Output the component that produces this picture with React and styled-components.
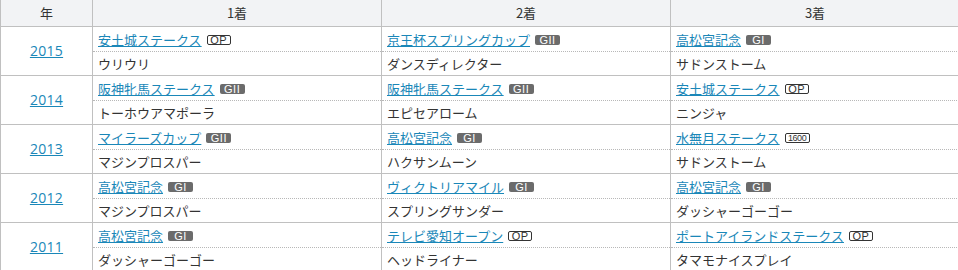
import React from 'react';
import styled, { createGlobalStyle } from 'styled-components';

const GlobalStyle = createGlobalStyle`
  html, body {
    margin: 0;
    padding: 0;
    background: #fff;
    overflow: hidden;
  }
  body {
    font-family: 'Noto Sans CJK JP', 'Noto Sans', sans-serif;
    font-size: 13px;
    color: #333;
  }
`;

const results = [
  {
    year: '2015',
    places: [
      { race: '安土城ステークス', grade: 'OP', horse: 'ウリウリ' },
      { race: '京王杯スプリングカップ', grade: 'G2', horse: 'ダンスディレクター' },
      { race: '高松宮記念', grade: 'G1', horse: 'サドンストーム' },
    ],
  },
  {
    year: '2014',
    places: [
      { race: '阪神牝馬ステークス', grade: 'G2', horse: 'トーホウアマポーラ' },
      { race: '阪神牝馬ステークス', grade: 'G2', horse: 'エピセアローム' },
      { race: '安土城ステークス', grade: 'OP', horse: 'ニンジャ' },
    ],
  },
  {
    year: '2013',
    places: [
      { race: 'マイラーズカップ', grade: 'G2', horse: 'マジンプロスパー' },
      { race: '高松宮記念', grade: 'G1', horse: 'ハクサンムーン' },
      { race: '水無月ステークス', grade: '1600', horse: 'サドンストーム' },
    ],
  },
  {
    year: '2012',
    places: [
      { race: '高松宮記念', grade: 'G1', horse: 'マジンプロスパー' },
      { race: 'ヴィクトリアマイル', grade: 'G1', horse: 'スプリングサンダー' },
      { race: '高松宮記念', grade: 'G1', horse: 'ダッシャーゴーゴー' },
    ],
  },
  {
    year: '2011',
    places: [
      { race: '高松宮記念', grade: 'G1', horse: 'ダッシャーゴーゴー' },
      { race: 'テレビ愛知オープン', grade: 'OP', horse: 'ヘッドライナー' },
      { race: 'ポートアイランドステークス', grade: 'OP', horse: 'タマモナイスプレイ' },
    ],
  },
];

const gradeLabel = {
  G1: 'GI',
  G2: 'GII',
  OP: 'OP',
  1600: '1600',
};

const App = () => {
  return (
    <>
      <GlobalStyle />
      <Table>
        <HeadCell>年</HeadCell>
        <HeadCell>1着</HeadCell>
        <HeadCell>2着</HeadCell>
        <HeadCell>3着</HeadCell>
        {results.map((row) => (
          <React.Fragment key={row.year}>
            <YearCell>
              <YearLink href="#">{row.year}</YearLink>
            </YearCell>
            {row.places.map((p, i) => (
              <PlaceCell key={i}>
                <RaceLine>
                  <Link href="#">{p.race}</Link>
                  <Badge $kind={p.grade}>{gradeLabel[p.grade]}</Badge>
                </RaceLine>
                <HorseLine>{p.horse}</HorseLine>
              </PlaceCell>
            ))}
          </React.Fragment>
        ))}
      </Table>
    </>
  );
};

const Table = styled.div`
  display: grid;
  grid-template-columns: 92px repeat(3, 289px);
  width: 959px;
`;

const HeadCell = styled.div`
  height: 26px;
  line-height: 26px;
  text-align: center;
  background: #f2f3f5;
  border-left: 1px solid #c0c0c0;
  border-bottom: 1px solid #c0c0c0;
  color: #333;
`;

const YearCell = styled.div`
  display: flex;
  align-items: center;
  justify-content: center;
  height: 48px;
  border-left: 1px solid #c0c0c0;
  border-bottom: 1px solid #c0c0c0;
`;

const PlaceCell = styled.div`
  display: flex;
  flex-direction: column;
  height: 48px;
  border-left: 1px solid #c0c0c0;
  border-bottom: 1px solid #c0c0c0;
`;

const RaceLine = styled.div`
  display: flex;
  align-items: center;
  height: 25px;
  padding: 1px 0 0 5px;
  box-sizing: border-box;
  border-bottom: 1px dotted #b8b8b8;
`;

const HorseLine = styled.div`
  display: flex;
  align-items: center;
  height: 22px;
  padding-left: 5px;
  color: #333;
`;

const Link = styled.a`
  color: #1a87b8;
  text-decoration: underline;
  line-height: 16px;
`;

const YearLink = styled(Link)`
  font-family: 'Open Sans', 'Noto Sans', sans-serif;
  font-size: 14px;
  letter-spacing: 0.3px;
`;

const Badge = styled.span`
  display: inline-flex;
  align-items: center;
  justify-content: center;
  box-sizing: border-box;
  width: ${(p) => (p.$kind === 'OP' ? '24px' : '25px')};
  height: 10px;
  margin-left: 5px;
  border-radius: 2px;
  font-family: 'Liberation Sans', Arial, sans-serif;
  font-size: ${(p) => (p.$kind === '1600' ? '9px' : '11px')};
  letter-spacing: ${(p) => (p.$kind === '1600' ? '-0.4px' : '0.5px')};
  line-height: 10px;
  ${(p) =>
    p.$kind === 'G1' || p.$kind === 'G2'
      ? `background: #6b6b6b; color: #fff;`
      : `background: #fff; color: #333; border: 1px solid #333;`}
`;

export default App;
